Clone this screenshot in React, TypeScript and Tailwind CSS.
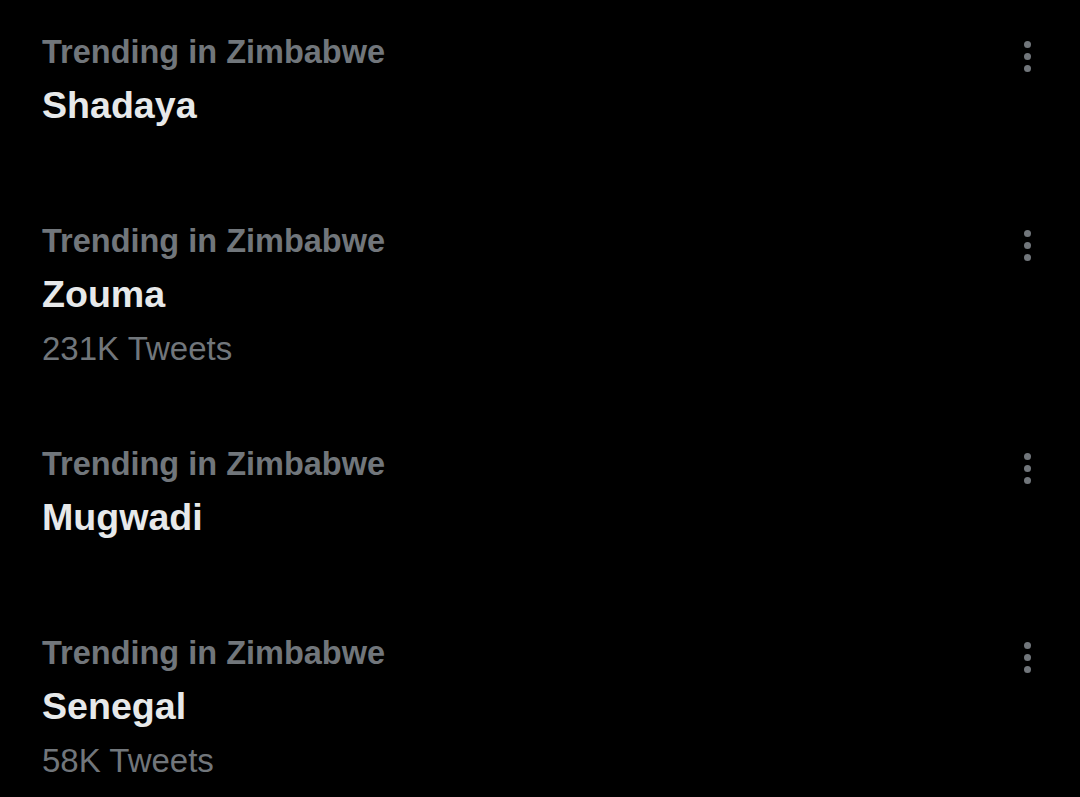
import React from 'react';

interface Trend {
    place: string;
    name: string;
    count?: string;
}

const trends: Trend[] = [
    { place: 'Trending in Zimbabwe', name: 'Shadaya' },
    { place: 'Trending in Zimbabwe', name: 'Zouma', count: '231K Tweets' },
    { place: 'Trending in Zimbabwe', name: 'Mugwadi' },
    { place: 'Trending in Zimbabwe', name: 'Senegal', count: '58K Tweets' },
];

const MoreDots: React.FC = () => (
    <div className="mt-[15px] flex w-[7px] flex-col gap-[5px]">
        <span className="h-[7px] w-[7px] rounded-full bg-[#71767b]" />
        <span className="h-[7px] w-[7px] rounded-full bg-[#71767b]" />
        <span className="h-[7px] w-[7px] rounded-full bg-[#71767b]" />
    </div>
);

const TrendItem: React.FC<{ trend: Trend }> = ({ trend }) => (
    <div className={`flex items-start justify-between pl-[42px] pr-[49px] pt-[26px] ${trend.count ? 'pb-[34px]' : 'pb-[58px]'}`}>
        <div className="flex flex-col">
            <span className="text-[32.5px] leading-[53px] font-bold text-[#71767b]">{trend.place}</span>
            <span className="text-[37.6px] leading-[52px] font-bold text-[#e7e9ea]">{trend.name}</span>
            {trend.count && (
                <span className="text-[33px] leading-[58px] text-[#71767b]">{trend.count}</span>
            )}
        </div>
        <MoreDots />
    </div>
);

export default function App() {
    return (
        <div className="min-h-[797px] w-[1080px] bg-black" style={{ fontFamily: '"Liberation Sans", Arial, sans-serif' }}>
            {trends.map((t) => (
                <TrendItem key={t.name} trend={t} />
            ))}
        </div>
    );
}
